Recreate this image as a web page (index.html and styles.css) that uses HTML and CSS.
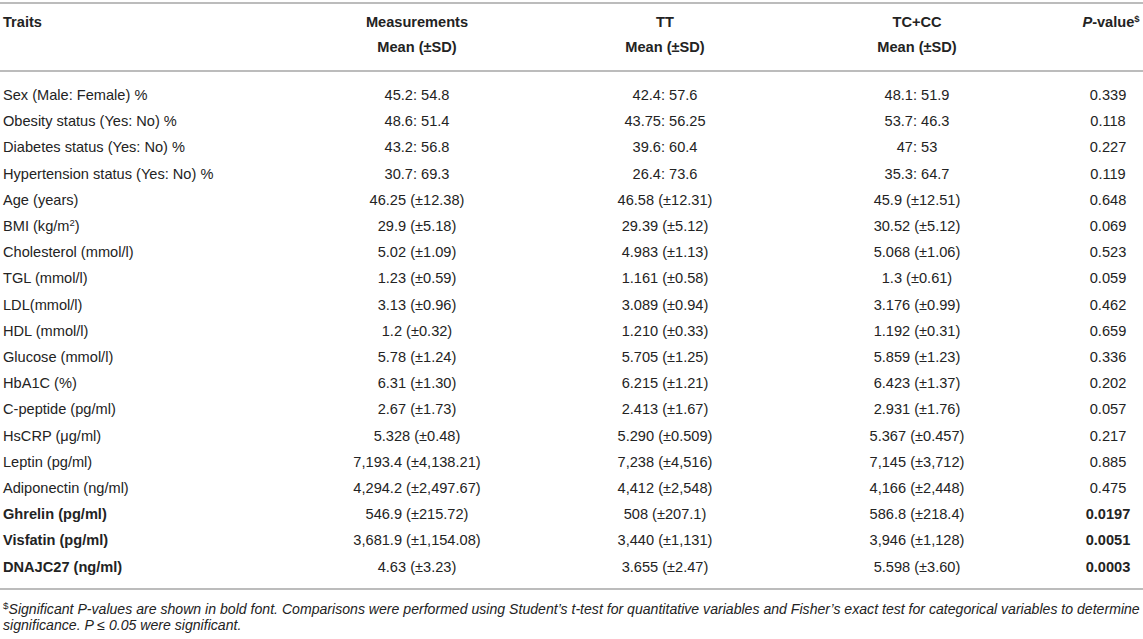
FILE: index.html
```html
<!DOCTYPE html>
<html>
<head>
<meta charset="utf-8">
<link rel="stylesheet" href="styles.css">
</head>
<body>
<div class="wrap">
<table class="data">
  <colgroup>
    <col class="c1"><col class="c2"><col class="c3"><col class="c4"><col class="c5">
  </colgroup>
  <thead>
    <tr>
      <th class="trait">Traits</th>
      <th>Measurements<br>Mean (±SD)</th>
      <th>TT<br>Mean (±SD)</th>
      <th>TC+CC<br>Mean (±SD)</th>
      <th class="pv"><i>P</i>-value<sup>$</sup></th>
    </tr>
  </thead>
  <tbody>
    <tr class="first"><td class="trait">Sex (Male: Female) %</td><td>45.2: 54.8</td><td>42.4: 57.6</td><td>48.1: 51.9</td><td>0.339</td></tr>
    <tr><td class="trait">Obesity status (Yes: No) %</td><td>48.6: 51.4</td><td>43.75: 56.25</td><td>53.7: 46.3</td><td>0.118</td></tr>
    <tr><td class="trait">Diabetes status (Yes: No) %</td><td>43.2: 56.8</td><td>39.6: 60.4</td><td>47: 53</td><td>0.227</td></tr>
    <tr><td class="trait">Hypertension status (Yes: No) %</td><td>30.7: 69.3</td><td>26.4: 73.6</td><td>35.3: 64.7</td><td>0.119</td></tr>
    <tr><td class="trait">Age (years)</td><td>46.25 (±12.38)</td><td>46.58 (±12.31)</td><td>45.9 (±12.51)</td><td>0.648</td></tr>
    <tr><td class="trait">BMI (kg/m<sup>2</sup>)</td><td>29.9 (±5.18)</td><td>29.39 (±5.12)</td><td>30.52 (±5.12)</td><td>0.069</td></tr>
    <tr><td class="trait">Cholesterol (mmol/l)</td><td>5.02 (±1.09)</td><td>4.983 (±1.13)</td><td>5.068 (±1.06)</td><td>0.523</td></tr>
    <tr><td class="trait">TGL (mmol/l)</td><td>1.23 (±0.59)</td><td>1.161 (±0.58)</td><td>1.3 (±0.61)</td><td>0.059</td></tr>
    <tr><td class="trait">LDL(mmol/l)</td><td>3.13 (±0.96)</td><td>3.089 (±0.94)</td><td>3.176 (±0.99)</td><td>0.462</td></tr>
    <tr><td class="trait">HDL (mmol/l)</td><td>1.2 (±0.32)</td><td>1.210 (±0.33)</td><td>1.192 (±0.31)</td><td>0.659</td></tr>
    <tr><td class="trait">Glucose (mmol/l)</td><td>5.78 (±1.24)</td><td>5.705 (±1.25)</td><td>5.859 (±1.23)</td><td>0.336</td></tr>
    <tr><td class="trait">HbA1C (%)</td><td>6.31 (±1.30)</td><td>6.215 (±1.21)</td><td>6.423 (±1.37)</td><td>0.202</td></tr>
    <tr><td class="trait">C-peptide (pg/ml)</td><td>2.67 (±1.73)</td><td>2.413 (±1.67)</td><td>2.931 (±1.76)</td><td>0.057</td></tr>
    <tr><td class="trait">HsCRP (μg/ml)</td><td>5.328 (±0.48)</td><td>5.290 (±0.509)</td><td>5.367 (±0.457)</td><td>0.217</td></tr>
    <tr><td class="trait">Leptin (pg/ml)</td><td>7,193.4 (±4,138.21)</td><td>7,238 (±4,516)</td><td>7,145 (±3,712)</td><td>0.885</td></tr>
    <tr><td class="trait">Adiponectin (ng/ml)</td><td>4,294.2 (±2,497.67)</td><td>4,412 (±2,548)</td><td>4,166 (±2,448)</td><td>0.475</td></tr>
    <tr><td class="trait b">Ghrelin (pg/ml)</td><td>546.9 (±215.72)</td><td>508 (±207.1)</td><td>586.8 (±218.4)</td><td class="b">0.0197</td></tr>
    <tr><td class="trait b">Visfatin (pg/ml)</td><td>3,681.9 (±1,154.08)</td><td>3,440 (±1,131)</td><td>3,946 (±1,128)</td><td class="b">0.0051</td></tr>
    <tr class="last"><td class="trait b">DNAJC27 (ng/ml)</td><td>4.63 (±3.23)</td><td>3.655 (±2.47)</td><td>5.598 (±3.60)</td><td class="b">0.0003</td></tr>
  </tbody>
</table>
<p class="note"><sup>$</sup>Significant P-values are shown in bold font. Comparisons were performed using Student’s t-test for quantitative variables and Fisher’s exact test for categorical variables to determine<br>significance. P ≤ 0.05 were significant.</p>
</div>
</body>
</html>
```

FILE: styles.css
```css
html, body {
  margin: 0;
  padding: 0;
  background: #ffffff;
}
body {
  font-family: "Liberation Sans", Arial, Helvetica, sans-serif;
  color: #232323;
}
.wrap {
  padding-top: 2px;
  width: 1143px;
}
.data {
  width: 1143px;
  table-layout: fixed;
  border-collapse: collapse;
  font-size: 14.6px;
}
.c1 { width: 265px; }
.c2 { width: 304px; }
.c3 { width: 192px; }
.c4 { width: 312px; }
.c5 { width: 70px; }
.data thead tr {
  border-top: 2px solid #bcbcbc;
  border-bottom: 2px solid #bcbcbc;
}
.data th {
  font-weight: bold;
  text-align: center;
  vertical-align: top;
  line-height: 25px;
  padding: 6px 0 10px 0;
  white-space: nowrap;
}
.data th.trait {
  text-align: left;
  padding-left: 3px;
}
.data th.pv {
  padding-left: 6px;
}
.data td {
  text-align: center;
  line-height: 26.2px;
  padding: 0;
  white-space: nowrap;
}
.data td.trait {
  text-align: left;
  padding-left: 3px;
}
.data tr.first td { padding-top: 10px; }
.data tr.last td { padding-bottom: 8px; }
.data tbody tr.last {
  border-bottom: 2px solid #bcbcbc;
}
.b { font-weight: bold; }
sup {
  font-size: 0.65em;
  line-height: 0;
  vertical-align: 0.55em;
}
.note {
  margin: 11px 0 0 0;
  padding-left: 3px;
  font-size: 14.1px;
  line-height: 16px;
  font-style: italic;
  white-space: nowrap;
}
.note sup {
  font-style: normal;
  font-size: 0.7em;
}
```
